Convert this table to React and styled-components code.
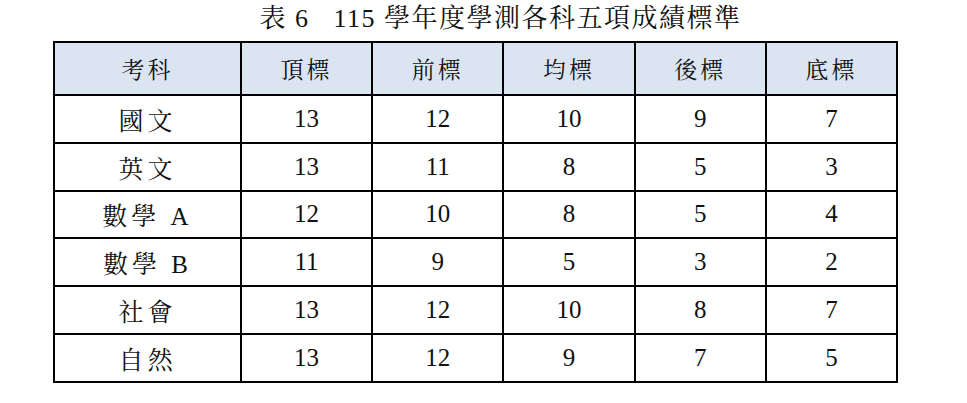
import React from 'react'
import styled, { createGlobalStyle } from 'styled-components';

const serif = `"Liberation Serif", "Times New Roman", "DejaVu Serif", "Noto Serif CJK TC", "Noto Sans CJK TC", serif`

const GlobalStyle = createGlobalStyle`
  html, body {
    margin: 0;
    padding: 0;
    background: #ffffff;
  }
  body {
    font-family: ${serif};
    color: #111;
  }
`

const Page = styled.div`
  width: 967px;
  height: 403px;
  padding-top: 4px;
  box-sizing: border-box;
`

const Title = styled.h1`
  margin: 0 0 7px 0;
  padding-left: 34px;
  height: 30px;
  line-height: 30px;
  font-family: ${serif};
  font-size: 26px;
  font-weight: 400;
  text-align: center;
  white-space: pre;
  letter-spacing: 1.5px;
`

const Table = styled.table`
  margin-left: 53px;
  width: 845px;
  border-collapse: collapse;
  border: 2.5px solid #000;
  table-layout: fixed;
  font-family: ${serif};
`

const HeadCell = styled.th`
  height: 51px;
  padding: 0;
  background: #dbe5f1;
  border: 2.5px solid #000;
  font-family: ${serif};
  font-size: 23px;
  font-weight: 400;
  letter-spacing: 3px;
  text-align: center;
  vertical-align: middle;
`

const Cell = styled.td`
  height: 45.8px;
  padding: 0;
  border: 2.5px solid #000;
  font-family: ${serif};
  font-size: 25px;
  text-align: center;
  vertical-align: middle;
  letter-spacing: ${props => props.subject ? "4px" : "0"};
`

const columns = ["考科", "頂標", "前標", "均標", "後標", "底標"]

const rows = [
    ["國文", 13, 12, 10, 9, 7],
    ["英文", 13, 11, 8, 5, 3],
    ["數學 A", 12, 10, 8, 5, 4],
    ["數學 B", 11, 9, 5, 3, 2],
    ["社會", 13, 12, 10, 8, 7],
    ["自然", 13, 12, 9, 7, 5],
]

const App = () => {
    return (
        <Page>
            <GlobalStyle />
            <Title>{"表 6   115 學年度學測各科五項成績標準"}</Title>
            <Table>
                <colgroup>
                    <col style={{ width: "187px" }} />
                    <col /><col /><col /><col /><col />
                </colgroup>
                <thead>
                    <tr>
                        {columns.map(c => <HeadCell key={c}>{c}</HeadCell>)}
                    </tr>
                </thead>
                <tbody>
                    {rows.map(r => (
                        <tr key={r[0]}>
                            {r.map((v, i) => (
                                <Cell key={i} subject={i === 0}>{v}</Cell>
                            ))}
                        </tr>
                    ))}
                </tbody>
            </Table>
        </Page>
    );
}

export default App;
